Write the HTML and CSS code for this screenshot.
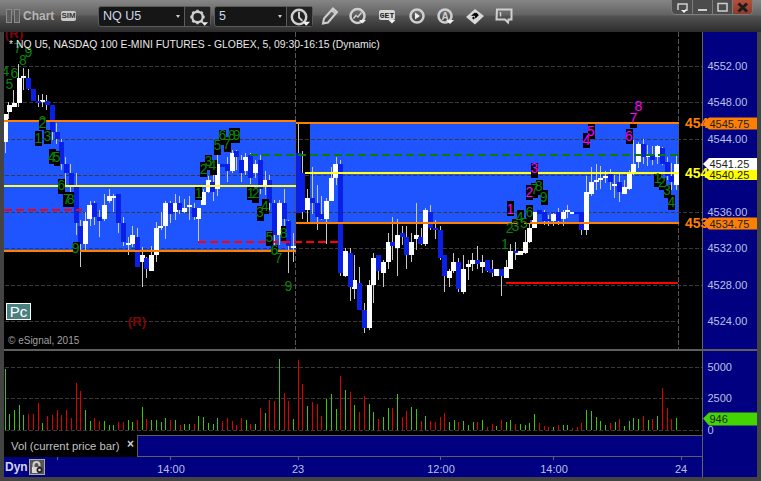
FILE: index.html
```html
<!DOCTYPE html>
<html lang="en">
<head>
<meta charset="utf-8">
<title>Chart</title>
<link rel="stylesheet" href="styles.css">
</head>
<body>
<div class="window">
  <header class="toolbar">
    <div class="handles"><span class="handle"></span><span class="handle"></span></div>
    <span class="app-title">Chart</span>
    <span class="sim">SIM</span>
    <div class="combo combo-symbol">
      <span class="combo-value">NQ U5</span>
      <span class="caret"></span>
      <span class="combo-btn">
        <svg class="ico" viewBox="0 0 26 20" width="26" height="20">
          <circle class="ln25" cx="13" cy="10" r="5.500"/>
          <path class="ln25" d="M13 2.500v2.500M13 15v2.500M5.500 10h2.500M18 10h2.500M7.700 4.700l1.800 1.800M16.500 13.500l1.800 1.800M7.700 15.300l1.800-1.800M16.500 6.500l1.800-1.800"/>
          <circle class="dot" cx="13" cy="10" r="1.500"/>
          <path class="tri" d="M17 15.500h7l-3.500 3.500z"/>
        </svg>
      </span>
    </div>
    <div class="combo combo-interval">
      <span class="combo-value">5</span>
      <span class="caret"></span>
      <span class="combo-btn">
        <svg class="ico" viewBox="0 0 26 20" width="26" height="20">
          <circle class="ln25" cx="12.500" cy="10" r="7.500"/>
          <path class="ln2" d="M12.500 4.500V10.500L16 14"/>
          <path class="tri" d="M16 15h8l-4 4z"/>
        </svg>
      </span>
    </div>
    <svg class="tools" viewBox="316 0 204 32" width="204" height="32">
      <path class="ln2" d="M323 23.500l1-5 9-10 4 3.500-9 10.500z"/>
      <path class="ln2" d="M331.500 10l4 3.500"/>
      <circle class="ln25" cx="357.500" cy="16" r="7"/>
      <path class="ln15" d="M353.500 18.500l2.500-3 2 1.500 3.500-4.500"/>
      <path class="tri" d="M359 20h7l-3.500 3.500z"/>
      <rect class="fillw" x="379" y="10" width="16" height="10" rx="2"/>
      <text class="get" x="387" y="18">GET</text>
      <path class="tri" d="M388.500 20h7l-3.500 3.500z"/>
      <circle class="ln25" cx="417" cy="16" r="6.500"/>
      <path class="tri" d="M415 12.500l5 3.500-5 3.500z"/>
      <circle class="ln25" cx="445" cy="16" r="6.500"/>
      <text class="a" x="445" y="19.500">A</text>
      <path class="tri" d="M446 20h8l-4 4z"/>
      <path class="fillw" d="M466 17l9-8 9 7-9 8.500z"/>
      <path class="blk" d="M471 16l3.500-3.500 1 3zM479 15l-3.500 3.500-1-3z"/>
      <path class="blk" d="M474 14.500l2-2 2.500 2-2 2zM472 18l1.500-1.500 1.500 1.500-1.500 1.500z"/>
      <path class="ln2" d="M497 9.500h14.500v10h-3l-.500 3-3-3h-8.500z"/>
      <path class="ln15" d="M500.500 12v4.500"/>
    </svg>
    <div class="winbtns">
      <span class="winbtn">
        <svg viewBox="0 0 20 15" width="20" height="15"><path class="ln15" d="M6 10V4h9v6h-2"/><path class="tri" d="M9 10h6l-3 3z"/></svg>
      </span>
      <span class="winbtn">
        <svg viewBox="0 0 20 15" width="20" height="15"><path class="ln2" d="M5 10h9"/></svg>
      </span>
      <span class="winbtn">
        <svg viewBox="0 0 20 15" width="20" height="15"><rect class="ln15" x="5" y="3.500" width="9" height="7.500"/></svg>
      </span>
      <span class="winbtn winbtn-close">
        <svg viewBox="0 0 20 15" width="20" height="15"><path class="x" d="M5.500 3.500l8.500 8M14 3.500l-8.500 8"/></svg>
      </span>
    </div>
  </header>

  <main class="panes">
    <svg class="pane price" viewBox="4 32 753 317" width="753" height="317">
      <!-- zones -->
      <rect class="zone" x="4" y="122" width="292" height="128"/>
      <rect class="zone" x="310" y="124" width="369" height="98"/>
      <!-- grid -->
      <path class="grid" d="M5 66.500H706M5 102.500H706M5 139.500H706M5 175.500H679M5 212.500H706M5 248.500H706M5 285.500H706M5 321.500H679"/>
      <path class="vgrid" d="M295.500 32V349M678.500 32V349"/>

      <!-- candles -->
      <g transform="scale(.33333)">
        <path class="wick" d="M27 305V357M42 270V320M57 192V320M72 205V270M85 207V270M115 285V320M128 282V320M141 285V330"/>
        <path class="wh" d="M18 342V390M28 315V336M44 309V321M58 234V309M72 228V234M128 300V306"/>
        <path class="bl" d="M85 234V267M100 267V303M115 303V309M142 303V315M157 315V390"/>
      </g>
      <g transform="translate(0 120) scale(.33333)">
        <path class="wick" d="M16 66V99M157 0V60M171 10V72M184 57V150M198 111V195M213 132V220M229 159V345M241 300V440M256 276V393M271 243V318M283 243V315M298 270V351M313 222V303M328 207V249M340 222V276M355 222V340M370 291V378M385 351V405M397 318V380M412 324V441M427 380V501M439 410V474M454 378V450M469 305V426M484 276V330M496 243V357M511 243V309M526 222V300M540 228V282M553 237V280M568 228V300M583 250V300M595 297V366M610 207V255M625 168V220M640 165V243M652 100V228M682 110V186M697 90V160M709 90V150M724 105V186M738 100V165M751 100V192M766 120V175M781 105V222M796 153V225M808 165V270M823 240V375M838 240V375M853 207V345M865 300V459M880 339V426"/>
        <path class="wh" d="M18 0V66M256 303V372M270 255V297M313 255V297M328 228V243M342 228V234M385 369V375M397 345V372M427 405V426M454 405V453M469 324V405M483 318V324M496 249V318M526 249V276M553 264V276M568 255V261M595 264V297M610 216V255M625 180V216M652 132V207M697 99V153M738 111V153M766 132V159M795 180V201M838 249V345M880 378V384"/>
        <path class="bl" d="M157 0V36M172 36V57M184 66V132M199 132V159M214 159V195M229 195V309M241 318V372M283 249V291M298 291V303M355 222V309M370 309V366M412 351V441M439 414V447M511 249V282M540 249V270M583 264V291M639 186V216M667 132V141M682 132V153M709 93V111M724 120V159M751 105V174M781 120V207M808 180V249M823 249V345M853 249V297M865 303V378"/>
      </g>
      <g transform="translate(290 120) scale(.33333)">
        <path class="wick" d="M25 12V207M37 94V297M52 207V309M67 141V282M82 195V330M94 228V300M109 234V372M124 141V240M139 111V195M151 120V468M166 384V470M181 384V543M193 405V537M208 441V570M223 549V639M238 480V630M250 400V549M265 405V480M280 420V501M295 339V447M307 291V420M322 297V468M337 318V375M349 318V447M364 339V426M379 249V390M394 324V375M406 264V378M421 255V330M436 300V357M451 318V420M463 405V516M478 447V501M492 399V459M505 414V516M520 405V522M535 420V480M549 399V453M562 378V447M577 405V459M592 420V456M607 420V471M634 447V528M649 420V474M661 372V447M676 366V420"/>
        <path class="wh" d="M52 234V270M109 243V297M124 174V243M137 132V174M166 393V468M193 480V507M238 495V624M250 414V495M280 426V459M295 366V426M322 345V384M364 366V405M379 345V357M406 270V372M478 453V474M492 426V453M520 447V516M535 432V441M549 420V432M577 426V441M619 447V468M649 441V474M661 393V447M687 393V405"/>
        <path class="bl" d="M25 99V280M37 159V276M67 234V249M82 249V291M94 282V297M151 132V459M181 399V501M208 489V570M223 570V624M265 405V453M307 366V378M337 339V351M349 351V405M393 351V372M421 276V324M436 324V330M451 330V414M463 405V468M505 426V507M562 420V432M592 420V453M606 447V459M634 447V468M676 393V399"/>
      </g>
      <g transform="translate(500 90) scale(.33333)">
        <path class="wick" d="M76 420V492M90 400V460M133 360V405M147 375V408M160 370V408M175 354V405M190 360V408M202 345V385M245 366V435M259 258V435M274 231V318M289 222V300M303 228V297M316 243V280M331 237V300M345 255V324M358 250V336M373 270V312M388 240V300M400 150V255M415 156V235M430 147V222M444 165V228M457 168V225M472 165V222M487 170V225M502 200V270M514 220V300M529 195V300"/>
        <path class="wh" d="M61 483V495M76 456V489M90 414V456M104 366V414M160 372V393M190 366V387M202 360V366M217 366V372M259 306V420M274 276V312M289 270V276M303 264V270M316 258V264M345 282V288M373 291V312M388 249V297M400 222V249M415 162V216M444 195V201M472 168V201M529 222V285"/>
        <path class="bl" d="M118 360V372M133 366V393M147 387V393M175 366V393M231 366V372M245 366V420M331 249V276M358 276V306M430 162V201M457 195V210M487 174V222M502 216V258M514 258V276"/>
      </g>

      <!-- levels -->
      <path class="orange" d="M4 121H296M4 251H296M296 123H679M296 223H679"/>
      <path class="yellow" d="M4 186H296M305 173H679"/>
      <path class="dgreen" d="M250 155H679"/>
      <path class="dred" d="M4 210H82M198 242H338"/>
      <path class="sred" d="M506 283H678"/>

      <!-- study markers -->
      <g class="labels" transform="scale(.33333)">
        <path class="blk" d="M117 378h21v12h-21z"/>
        <g class="gr">
          <text x="53" y="158">7</text><text x="85" y="172">9</text><text x="69" y="196">8</text>
          <text x="16" y="228">4</text><text x="43" y="233">6</text><text x="28" y="268">5</text>
          <text x="127" y="378">2</text>
        </g>
        <text class="rr" x="42" y="114">(R)</text>
      </g>
      <g class="labels" transform="translate(0 120) scale(.33333)">
        <path class="blk" d="M117 0h21v24h-21zM105 33h21v45h-21zM132 30h21v42h-21zM147 87h21v45h-21zM162 93h18v45h-18zM174 177h21v45h-21zM189 216h33v45h-33zM219 366h21v45h-21zM585 201h21v39h-21zM600 126h21v45h-21zM615 105h21v45h-21zM630 120h21v45h-21zM642 60h21v45h-21zM657 30h21v45h-21zM672 51h21v45h-21zM687 24h33v45h-33zM741 201h21v39h-21zM756 204h21v45h-21zM771 258h21v45h-21zM786 237h21v45h-21zM798 333h21v45h-21zM813 375h21v30h-21zM843 318h15v45h-15z"/>
        <g class="gr">
          <text x="127" y="24">2</text><text x="115" y="70">1</text><text x="142" y="62">3</text>
          <text x="155" y="126">4</text><text x="170" y="126">5</text><text x="184" y="210">6</text>
          <text x="200" y="252">7</text><text x="212" y="252">8</text><text x="227" y="400">9</text>
          <text x="596" y="234">1</text><text x="611" y="162">2</text><text x="625" y="138">3</text>
          <text x="637" y="150">4</text><text x="652" y="90">5</text><text x="667" y="60">6</text>
          <text x="680" y="87">7</text><text x="696" y="60">8</text><text x="710" y="60">9</text>
          <text x="752" y="234">1</text><text x="767" y="234">2</text><text x="780" y="291">3</text>
          <text x="795" y="273">4</text><text x="808" y="366">5</text><text x="823" y="405">6</text>
          <text x="835" y="429">7</text><text x="851" y="354">8</text><text x="865" y="513">9</text>
        </g>
        <text class="rr" x="411" y="618">(R)</text>
      </g>
      <g class="labels" transform="translate(500 90) scale(.33333)">
        <path class="blk" d="M21 333h21v45h-21zM78 285h21v45h-21zM93 219h21v45h-21zM249 129h21v45h-21zM264 102h21v45h-21zM378 117h21v45h-21zM390 102h21v12h-21zM51 360h21v45h-21zM36 387h54v12h-54zM78 345h21v45h-21zM93 279h21v45h-21zM108 270h21v45h-21zM123 300h21v45h-21zM462 252h21v39h-21zM477 264h21v36h-21zM492 285h21v39h-21zM504 315h21v45h-21z"/>
        <g class="gr">
          <text x="15" y="477">1</text><text x="29" y="429">2</text><text x="46" y="423">3</text>
          <text x="59" y="396">4</text><text x="72" y="414">5</text><text x="88" y="381">6</text>
          <text x="104" y="312">7</text><text x="116" y="304">8</text><text x="131" y="336">9</text>
          <text x="473" y="279">1</text><text x="486" y="291">2</text><text x="501" y="315">3</text>
          <text x="514" y="351">4</text>
        </g>
        <g class="mg">
          <text x="31" y="372">1</text><text x="88" y="322">2</text><text x="103" y="250">3</text>
          <text x="259" y="166">4</text><text x="273" y="138">5</text><text x="387" y="153">6</text>
          <text x="400" y="100">7</text><text x="415" y="63">8</text>
        </g>
      </g>

      <text class="chart-title" x="9" y="48">* NQ U5, NASDAQ 100 E-MINI FUTURES - GLOBEX, 5, 09:30-16:15 (Dynamic)</text>
      <text class="copyright" x="8" y="344">© eSignal, 2015</text>

      <!-- price scale -->
      <rect class="axis-bg" x="703" y="32" width="54" height="317"/>
      <path class="axis-line" d="M702.500 32V349"/>
      <g class="axis-text">
        <text x="707.500" y="70">4552.00</text>
        <text x="707.500" y="106">4548.00</text>
        <text x="707.500" y="143">4544.00</text>
        <text x="707.500" y="216">4536.00</text>
        <text x="707.500" y="252">4532.00</text>
        <text x="707.500" y="289">4528.00</text>
        <text x="707.500" y="325">4524.00</text>
      </g>
      <text class="edge edge-o" x="685" y="128">454</text>
      <text class="edge edge-y" x="685" y="178">454</text>
      <text class="edge edge-o" x="685" y="228">453</text>
      <path class="tag-o" d="M703 123.500l6-6h48v12h-48z"/>
      <path class="tag-o" d="M703 223.500l6-6h48v12h-48z"/>
      <path class="tag-y" d="M703 175l6-5h48v10h-48z"/>
      <path class="tag-w" d="M703 164l6-6h48v12h-48z"/>
      <g class="tag-text">
        <text x="709.500" y="127.500">4545.75</text>
        <text x="709.500" y="178.500">4540.25</text>
        <text x="709.500" y="168">4541.25</text>
        <text x="709.500" y="227.500">4534.75</text>
      </g>
    </svg>

    <div class="pc">Pc</div>

    <div class="divider"></div>

    <svg class="pane volume" viewBox="4 351 753 84" width="753" height="84">
      <path class="grid" d="M5 367.500H706M5 398.500H706M5 430.500H706"/>
      <g transform="translate(0 345) scale(.33333)">
        <path class="vg" d="M16 256V72M28 256V207M43 256V195M58 256V180M70 256V210M127 256V234M256 256V195M271 256V228M313 256V228M328 256V240M340 256V240M385 256V225M397 256V231M427 256V186M454 256V225M469 256V225M484 256V231M496 256V219M526 256V225M553 256V237M568 256V237M595 256V213M610 256V216M625 256V234M640 256V237M652 256V219M739 256V225M766 256V237M796 256V204M838 256V42M880 256V222M922 256V183M979 256V162M994 256V147M1009 256V192M1036 256V135M1063 256V180M1108 256V177M1120 256V201"/>
        <path class="vr" d="M85 256V207M100 256V207M115 256V174M142 256V213M157 256V210M172 256V195M184 256V210M199 256V195M214 256V219M229 256V114M241 256V138M283 256V219M298 256V228M355 256V231M370 256V231M412 256V225M439 256V222M511 256V225M541 256V240M583 256V237M667 256V228M682 256V219M697 256V228M709 256V240M724 256V219M751 256V237M781 256V189M808 256V165M823 256V168M853 256V144M865 256V168M895 256V45M907 256V117M937 256V171M952 256V177M964 256V213M1021 256V93M1051 256V141M1078 256V201M1093 256V153M1135 256V222"/>
      </g>
      <g transform="translate(380 345) scale(.33333)">
        <path class="vg" d="M10 256V216M25 256V189M52 256V147M94 256V186M109 256V192M136 256V213M208 256V231M223 256V225M250 256V228M265 256V240M280 256V231M307 256V225M349 256V243M379 256V231M391 256V225M421 256V237M436 256V240M448 256V234M463 256V207M520 256V246M550 256V240M562 256V240M619 256V195M634 256V198M649 256V216M661 256V228M676 256V240M706 256V231M733 256V243M748 256V228M760 256V219M775 256V222M805 256V225M832 256V213M889 256V219"/>
        <path class="vr" d="M37 256V189M67 256V216M79 256V198M124 256V228M151 256V228M166 256V231M181 256V216M193 256V204M235 256V231M292 256V231M322 256V246M337 256V237M364 256V225M406 256V237M478 256V234M493 256V243M505 256V246M535 256V240M577 256V249M592 256V246M604 256V234M691 256V234M718 256V222M790 256V213M817 256V222M847 256V129M862 256V189M874 256V222"/>
      </g>
      <rect class="axis-bg" x="703" y="351" width="54" height="84"/>
      <path class="axis-line" d="M702.500 351V435"/>
      <g class="axis-text">
        <text x="707.500" y="371">5000</text>
        <text x="707.500" y="402">2500</text>
        <text x="707.500" y="434">0</text>
      </g>
      <path class="tag-g" d="M703 418.500l6-6h48v13h-48z"/>
      <text class="tag-text" x="709.500" y="422.500">946</text>
    </svg>

    <div class="legend-row">
      <div class="legend">
        <span class="legend-name">Vol (current price bar)</span>
        <span class="legend-close">×</span>
      </div>
      <div class="legend-fill"></div>
      <div class="legend-axis"></div>
    </div>

    <div class="time-row">
      <span class="dyn">Dyn</span>
      <span class="lock">
        <svg viewBox="0 0 14 14" width="14" height="14">
          <path class="ln2" d="M3.500 12V5a3 3 0 0 1 6 0v1"/>
          <rect class="fillw" x="2" y="7" width="6" height="6"/>
          <circle class="dot" cx="9.500" cy="10" r="3"/>
          <circle class="lock-dot" cx="9.500" cy="10" r="1.300"/>
        </svg>
      </span>
      <svg class="time-axis" viewBox="50 457 707 20" width="707" height="20">
        <path class="axis-line" d="M57.500 457V460M170.500 457V460M298.500 457V460M440.500 457V460M553.500 457V460M681.500 457V460M702.500 457V477" />
        <g class="axis-text time-text">
          <text x="171" y="473">14:00</text>
          <text x="298" y="473">23</text>
          <text x="441" y="473">12:00</text>
          <text x="554" y="473">14:00</text>
          <text x="681" y="473">24</text>
        </g>
      </svg>
    </div>
  </main>
</div>
</body>
</html>
```

FILE: styles.css
```css
* { box-sizing: border-box; }
html, body { margin: 0; padding: 0; background: #3c3c3c; }
body { font-family: "Liberation Sans", Arial, sans-serif; }

.window {
  position: relative;
  width: 761px;
  height: 481px;
  display: flex;
  flex-direction: column;
  background: #434343;
  overflow: hidden;
}

/* title bar */
.toolbar {
  height: 32px;
  flex: none;
  display: flex;
  align-items: center;
  padding-left: 6px;
  background: linear-gradient(#868686 0, #626262 15px, #525252 16px, #2c2c2c 32px);
}
.handles { display: flex; gap: 2px; }
.handle { width: 6px; height: 14px; border: 1px solid #8a8a8a; background: #5c5c5c; }
.app-title { margin-left: 3px; font-size: 12px; font-weight: 700; color: #b4b4b4; width: 38px; }
.sim {
  width: 15px; height: 10px;
  font-size: 8px; line-height: 10px; font-weight: 700; text-align: center;
  color: #333; background: #c8c8c8; border-radius: 2px;
}
.combo {
  position: relative;
  height: 21px;
  display: flex;
  align-items: center;
  background: #161616;
  border: 1px solid #5a5a5a;
  border-radius: 3px;
}
.combo-symbol { width: 113px; margin-left: 22px; }
.combo-interval { width: 99px; margin-left: 3px; }
.combo-value { flex: 1; padding-left: 4px; font-size: 12.500px; color: #cfd8e6; }
.caret {
  width: 0; height: 0; margin-right: 4px;
  border-left: 2.500px solid transparent;
  border-right: 2.500px solid transparent;
  border-top: 3px solid #d0d0d0;
}
.combo-btn {
  width: 26px; height: 19px; flex: none;
  border-left: 1px solid #5a5a5a;
  background: #222;
  display: flex;
}
.ico { display: block; }
.tools { display: block; margin-left: 3px; flex: none; }
.winbtns {
  display: flex;
  align-self: flex-start;
  margin-left: auto;
  margin-right: 8px;
  height: 15px;
  border: 1px solid #7c7c7c;
  border-top: 0;
  border-radius: 0 0 5px 5px;
  background: #4c4c4c;
  overflow: hidden;
}
.winbtn { width: 20px; height: 14px; display: block; border-left: 1px solid #7c7c7c; }
.winbtn:first-child { border-left: 0; }
.winbtn svg { display: block; }
.winbtn-close { background: linear-gradient(#b4503c, #8e3a2a); }

/* shared icon strokes */
.ln15, .ln2, .ln25 { fill: none; stroke: #cfcfcf; }
.ln15 { stroke-width: 1.500; }
.ln2 { stroke-width: 2; }
.ln25 { stroke-width: 2.500; }
.dot { fill: #222; }
.tri { fill: #f0f0f0; }
.fillw { fill: #d8d8d8; }
.blk { fill: #000; }
.x { fill: none; stroke: #1c1c1c; stroke-width: 3; }
.get { font: 700 8px "Liberation Mono", monospace; fill: #222; text-anchor: middle; }
.a { font: 700 10px "Liberation Sans", sans-serif; fill: #cfcfcf; text-anchor: middle; }

/* panes */
.panes {
  position: relative;
  flex: 1;
  margin: 0 4px 4px;
  display: flex;
  flex-direction: column;
  background: #000;
}
.pane { display: block; flex: none; background: #000; }
.divider { height: 2px; flex: none; background: #5e5e5e; }
.zone { fill: #1f55ff; }
.grid { fill: none; stroke: #3a3a3a; stroke-width: 1; stroke-dasharray: 4 2; shape-rendering: crispEdges; }
.vgrid { fill: none; stroke: #555; stroke-width: 1; stroke-dasharray: 5 2; shape-rendering: crispEdges; }
.wick { fill: none; stroke: #c8c8c8; stroke-width: 3; shape-rendering: crispEdges; }
.wh { fill: none; stroke: #fff; stroke-width: 15; shape-rendering: crispEdges; }
.bl { fill: none; stroke: #0a20e6; stroke-width: 15; shape-rendering: crispEdges; }
.orange { fill: none; stroke: #ff8000; stroke-width: 2; shape-rendering: crispEdges; }
.yellow { fill: none; stroke: #ffff20; stroke-width: 2; shape-rendering: crispEdges; }
.dgreen { fill: none; stroke: #0a7a0a; stroke-width: 2; stroke-dasharray: 8 4; shape-rendering: crispEdges; }
.dred { fill: none; stroke: #ff0000; stroke-width: 2; stroke-dasharray: 8 4; shape-rendering: crispEdges; }
.sred { fill: none; stroke: #ff0000; stroke-width: 2; shape-rendering: crispEdges; }
.labels text { font-family: "Liberation Sans", sans-serif; font-size: 42px; text-anchor: middle; }
.gr text { fill: #0b840b; }
.mg text { fill: #ff00ff; }
.labels .rr { fill: #7a0808; font-weight: 700; font-size: 40px; }
.chart-title { font-size: 10.400px; fill: #e8e8e8; }
.copyright { font-size: 10px; fill: #a0a0a0; }
.axis-bg { fill: #000080; }
.axis-line { fill: none; stroke: #666; stroke-width: 1; shape-rendering: crispEdges; }
.axis-text text { font-size: 11px; fill: #b8c0e8; }
.edge { font-size: 14px; font-weight: 700; }
.edge-o { fill: #ff8000; }
.edge-y { fill: #ffff20; }
.tag-o { fill: #ff8000; }
.tag-y { fill: #ffff00; }
.tag-w { fill: #fff; }
.tag-g { fill: #44d400; }
.tag-text, .tag-text text { font-size: 11px; fill: #222; }
.vg { fill: none; stroke: #3cc800; stroke-width: 3; shape-rendering: crispEdges; }
.vr { fill: none; stroke: #e00000; stroke-width: 3; shape-rendering: crispEdges; }

/* overlay badge on the price pane */
.pc {
  position: absolute;
  left: 2px;
  top: 271px;
  width: 25px;
  height: 17px;
  border: 1px solid #fff;
  background: #4a8080;
  color: #fff;
  font-size: 15px;
  line-height: 15px;
  text-align: center;
}

/* legend strip */
.legend-row { height: 22px; flex: none; display: flex; }
.legend {
  width: 133px;
  display: flex;
  padding: 4px 0 0 7px;
  background: #000;
  border-top: 1px solid #000;
}
.legend-name { flex: 1; font-size: 11.300px; color: #c0c0c0; white-space: nowrap; }
.legend-close { font-size: 12px; line-height: 8px; font-weight: 700; color: #d0d0d0; margin-right: 3px; }
.legend-fill { flex: 1; background: #000080; border: 1px solid #5e5e5e; }
.legend-axis { width: 54px; flex: none; background: #000080; }

/* time axis */
.time-row {
  position: relative;
  height: 20px;
  flex: none;
  display: flex;
  align-items: center;
  background: #000080;
  border-top: 0;
}
.dyn { margin-left: 1px; font-size: 12px; font-weight: 700; color: #d0d4ee; width: 24px; }
.lock {
  width: 16px; height: 16px; flex: none;
  border: 1px solid #aaa;
  background: #555;
}
.lock svg { display: block; }
.lock-dot { fill: #d8d8d8; }
.time-axis { position: absolute; left: 46px; top: 0; display: block; }
.time-text text { text-anchor: middle; }
```
